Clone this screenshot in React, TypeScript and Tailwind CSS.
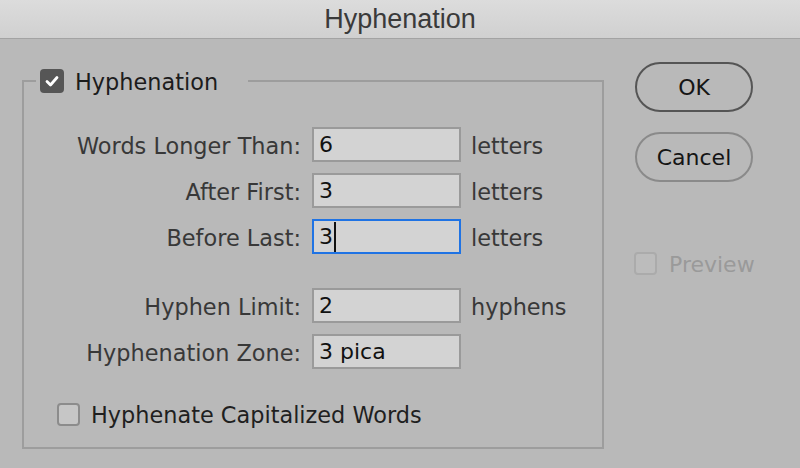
import React from "react";

const FONT = { fontFamily: '"DejaVu Sans", "Noto Sans", sans-serif' };

function Row({ label, value, unit, focused }: { label: string; value: string; unit?: string; focused?: boolean }) {
  return (
    <div className="flex items-center h-[35px]">
      <div className="w-[277px] text-right text-[22.4px] leading-none text-[#383838] pt-[3px]">{label}</div>
      <div
        className={
          focused
            ? "ml-[11px] w-[149px] h-[35px] border-2 border-[#1f73e4] bg-[#d3d3d3] flex items-center pl-[5px] text-[22px] text-[#111]"
            : "ml-[11px] w-[149px] h-[35px] border-2 border-[#9a9a9a] bg-[#d3d3d3] flex items-center pl-[5px] text-[22px] text-[#111]"
        }
      >
        <span>{value}</span>
        {focused && <span className="ml-[1px] w-[2px] h-[30px] bg-[#111]" />}
      </div>
      {unit && <div className="ml-[10px] text-[22.4px] leading-none text-[#383838] pt-[3px]">{unit}</div>}
    </div>
  );
}

export default function App() {
  return (
    <div className="w-[800px] h-[468px] bg-[#b9b9b9] flex flex-col overflow-hidden" style={FONT}>
      <div className="h-[38px] shrink-0 bg-gradient-to-b from-[#dcdcdc] to-[#d0d0d0] flex items-center justify-center">
        <span className="text-[27px] text-[#3a3a3a]" style={{ fontFamily: '"Liberation Sans", Arial, sans-serif' }}>
          Hyphenation
        </span>
      </div>
      <div className="h-[1px] shrink-0 bg-[#a3a3a3]" />
      <div className="flex flex-1 pl-[22px]">
        <div className="relative mt-[41px] w-[582px] h-[369px] border-2 border-[#9d9d9d] pt-[45px]">
          <div className="absolute left-[12px] top-[-13px] pl-[4px] pr-[30px] h-[24px] bg-[#b9b9b9] flex items-center">
            <div className="w-[24px] h-[24px] rounded-[4px] bg-[#565656] flex items-center justify-center">
              <svg width="16" height="16" viewBox="0 0 16 16">
                <path d="M3 8.5 L6.5 12 L13 4.5" fill="none" stroke="#fff" strokeWidth="2.8" strokeLinecap="round" strokeLinejoin="round" />
              </svg>
            </div>
            <span className="ml-[11px] text-[22.4px] leading-none text-[#1c1c1c] pt-[2px]">Hyphenation</span>
          </div>
          <div className="flex flex-col gap-[11px]">
            <Row label="Words Longer Than:" value="6" unit="letters" />
            <Row label="After First:" value="3" unit="letters" />
            <Row label="Before Last:" value="3" unit="letters" focused />
          </div>
          <div className="flex flex-col gap-[11px] mt-[34px]">
            <Row label="Hyphen Limit:" value="2" unit="hyphens" />
            <Row label="Hyphenation Zone:" value="3 pica" />
          </div>
          <div className="flex items-center mt-[33px] ml-[33px]">
            <div className="w-[23px] h-[23px] rounded-[4px] border-2 border-[#8c8c8c] bg-[#c6c6c6]" />
            <span className="ml-[11px] text-[22.4px] leading-none text-[#1f1f1f] pt-[2px]">Hyphenate Capitalized Words</span>
          </div>
        </div>
        <div className="ml-[31px] pt-[23px] flex flex-col">
          <button className="w-[118px] h-[50px] rounded-full border-2 border-[#555] text-[22px] text-[#151515] flex items-center justify-center">
            OK
          </button>
          <button className="mt-[20px] w-[118px] h-[50px] rounded-full border-2 border-[#8a8a8a] text-[22px] text-[#151515] flex items-center justify-center">
            Cancel
          </button>
          <div className="mt-[69px] flex items-center -ml-[1px]">
            <div className="w-[23px] h-[23px] rounded-[4px] border-2 border-[#ababab] bg-[#bcbcbc]" />
            <span className="ml-[12px] text-[22px] leading-none text-[#9a9a9a] pt-[3px]">Preview</span>
          </div>
        </div>
      </div>
    </div>
  );
}
